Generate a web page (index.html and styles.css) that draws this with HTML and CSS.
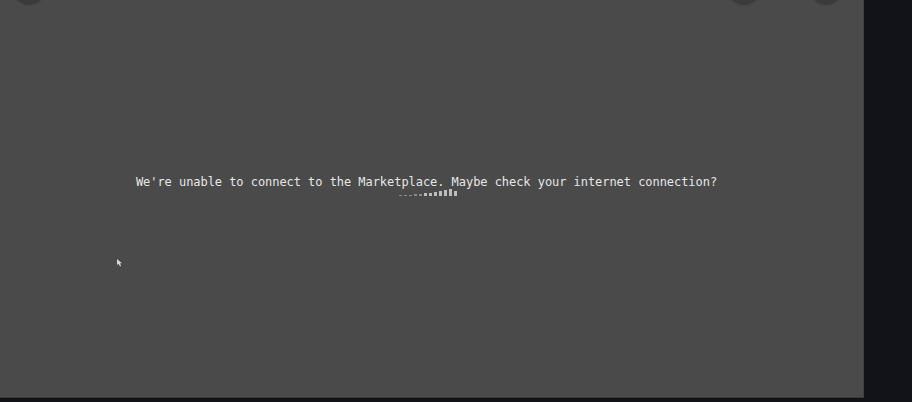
FILE: index.html
```html
<!DOCTYPE html>
<html lang="en">
<head>
  <meta charset="UTF-8" />
  <title>Marketplace</title>
  <link rel="stylesheet" href="styles.css">
</head>
<body>
  <div class="screen">
    <div class="panel">
      <div class="top-buttons">
        <span class="knob knob-left"></span>
        <span class="spacer"></span>
        <span class="knob"></span>
        <span class="knob"></span>
      </div>
      <div class="message">
        <p class="error-text">We're unable to connect to the Marketplace. Maybe check your internet connection?</p>
        <div class="loader">
          <span style="height:1px"></span>
          <span style="height:1px"></span>
          <span style="height:1px"></span>
          <span style="height:2px"></span>
          <span style="height:2px"></span>
          <span style="height:3px"></span>
          <span style="height:3px"></span>
          <span style="height:4px"></span>
          <span style="height:5px"></span>
          <span style="height:6px"></span>
          <span style="height:7px"></span>
          <span style="height:5px"></span>
        </div>
      </div>
      <svg class="cursor" width="6" height="8" viewBox="0 0 6 8">
        <path d="M0 0 L0 6 L1.5 4.8 L3 7.5 L4 7 L3 4.3 L5 4.3 Z" fill="#d8d8d8"/>
      </svg>
    </div>
    <div class="side"></div>
  </div>
</body>
</html>
```
FILE: styles.css
```css
* {
  box-sizing: border-box;
}

html, body {
  margin: 0;
  height: 100%;
  background: #111318;
  overflow: hidden;
}

.screen {
  display: flex;
  height: 402px;
}

.panel {
  position: relative;
  width: 864px;
  height: 398px;
  background: #4a4a4a;
  border-right: 1px solid #3e3e3e;
  border-bottom: 1px solid #3a3a3a;
  display: flex;
  flex-direction: column;
}

.side {
  flex: 1;
  background: #111318;
}

.top-buttons {
  display: flex;
  height: 0;
  padding-left: 13px;
  padding-right: 21px;
  gap: 50px;
}

.knob {
  width: 32px;
  height: 32px;
  border-radius: 50%;
  background: #3b3b3b;
  margin-top: -28px;
  flex-shrink: 0;
  box-shadow: 0 1px 2px rgba(0,0,0,0.25);
}

.spacer {
  flex: 1;
}

.message {
  margin-top: 174px;
  display: flex;
  flex-direction: column;
  align-items: center;
}

.error-text {
  margin: 0;
  padding-right: 10px;
  font-family: "DejaVu Sans Mono", monospace;
  font-size: 12px;
  letter-spacing: -0.05px;
  line-height: 16px;
  color: #e6e6e6;
}

.loader {
  display: flex;
  align-items: flex-end;
  gap: 2px;
  height: 8px;
  margin-top: -2px;
  margin-left: -8px;
}

.loader span {
  width: 3px;
  background: #bdbdbd;
}

.loader span:nth-child(-n+5) {
  background: #8a8a8a;
}

.cursor {
  position: absolute;
  left: 117px;
  top: 259px;
}
```
